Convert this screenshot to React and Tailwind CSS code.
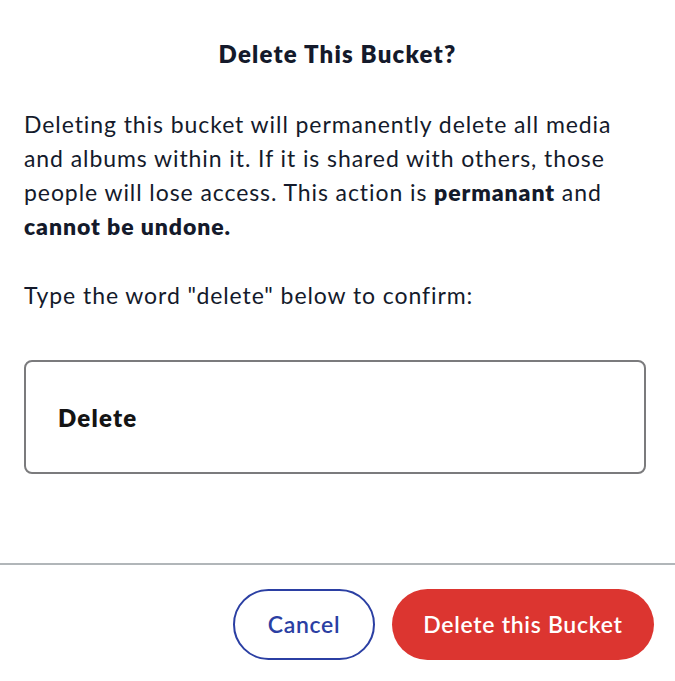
import React from "react";

export default function App() {
  return (
    <div className="w-[675px] h-[681px] bg-white text-[#141a2b] font-['Lato','Noto_Sans',sans-serif] overflow-hidden">
      <div className="px-6 pt-[37px]">
        <h2 className="text-center text-[24px] leading-[34px] font-extrabold tracking-[0.05em]">Delete This Bucket?</h2>

        <p className="mt-[36px] text-[23px] leading-[34px] tracking-[0.04em]">
          Deleting this bucket will permanently delete all media
          <br />
          and albums within it. If it is shared with others, those
          <br />
          people will lose access. This action is <b className="font-extrabold">permanant</b> and
          <br />
          <b className="font-extrabold">cannot be undone.</b>
        </p>

        <p className="mt-[35px] text-[23px] leading-[34px] tracking-[0.04em]">Type the word "delete" below to confirm:</p>

        <input
          className="mt-[48px] block w-[622px] h-[114px] border-2 border-[#7b7b7d] rounded-lg pl-[32px] text-[24px] font-extrabold tracking-[0.05em] text-[#141414] outline-none"
          defaultValue="Delete"
        />
      </div>

      <div className="mt-[89px] h-[2px] bg-[#b1b6b9]" />

      <div className="flex justify-end gap-[17px] pr-[21px] pt-[24px]">
        <button className="w-[142px] h-[71px] rounded-full border-2 border-[#2b3fa3] text-[#2b3fa3] text-[23px] font-semibold tracking-[0.03em]">
          Cancel
        </button>
        <button className="w-[262px] h-[71px] rounded-full bg-[#dc3530] text-white text-[23px] font-semibold tracking-[0.03em]">
          Delete this Bucket
        </button>
      </div>
    </div>
  );
}
